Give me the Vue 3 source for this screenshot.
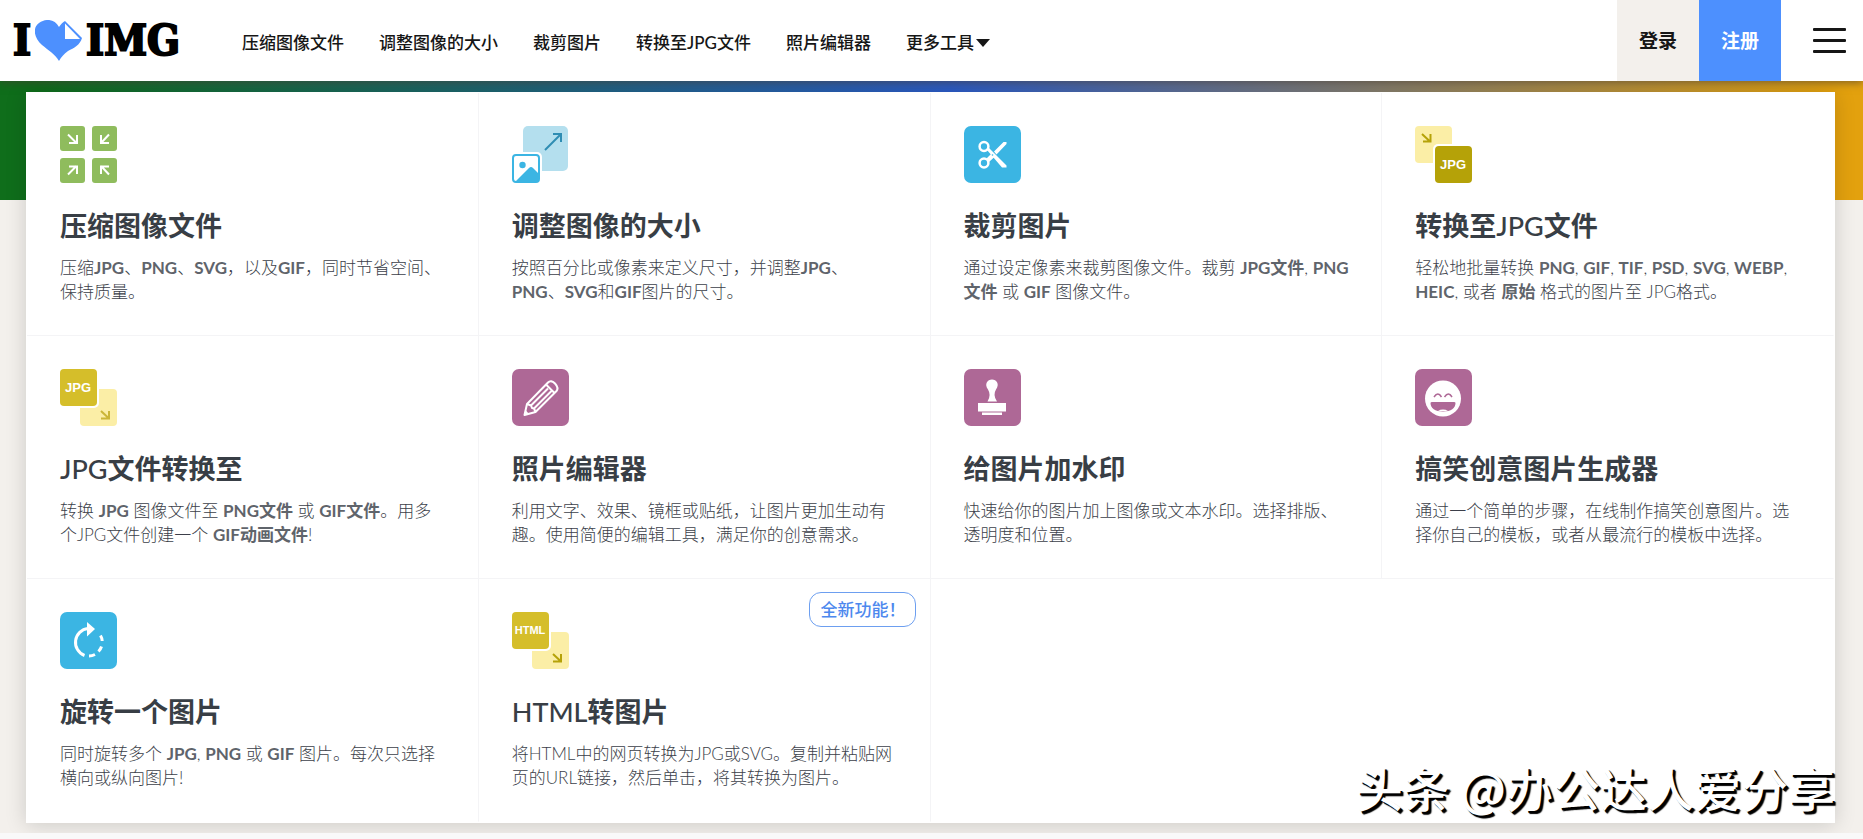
<script setup>
const navItems = ['压缩图像文件', '调整图像的大小', '裁剪图片', '转换至JPG文件', '照片编辑器']

// Descriptions mark their emphasised words with asterisks; each string is one line.
const tools = [
  { icon: 'compress', title: '压缩图像文件', lines: ['压缩*JPG*、*PNG*、*SVG*，以及*GIF*，同时节省空间、', '保持质量。'] },
  { icon: 'resize', title: '调整图像的大小', lines: ['按照百分比或像素来定义尺寸，并调整*JPG*、', '*PNG*、*SVG*和*GIF*图片的尺寸。'] },
  { icon: 'crop', title: '裁剪图片', lines: ['通过设定像素来裁剪图像文件。裁剪 *JPG文件*, *PNG*', '*文件* 或 *GIF* 图像文件。'] },
  { icon: 'tojpg', title: '转换至JPG文件', lines: ['轻松地批量转换 *PNG*, *GIF*, *TIF*, *PSD*, *SVG*, *WEBP*,', '*HEIC*, 或者 *原始* 格式的图片至 JPG格式。'] },
  { icon: 'fromjpg', label: 'JPG', title: 'JPG文件转换至', lines: ['转换 *JPG* 图像文件至 *PNG文件* 或 *GIF文件*。用多', '个JPG文件创建一个 *GIF动画文件*!'] },
  { icon: 'edit', title: '照片编辑器', lines: ['利用文字、效果、镜框或贴纸，让图片更加生动有', '趣。使用简便的编辑工具，满足你的创意需求。'] },
  { icon: 'stamp', title: '给图片加水印', lines: ['快速给你的图片加上图像或文本水印。选择排版、', '透明度和位置。'] },
  { icon: 'meme', title: '搞笑创意图片生成器', lines: ['通过一个简单的步骤，在线制作搞笑创意图片。选', '择你自己的模板，或者从最流行的模板中选择。'] },
  { icon: 'rotate', title: '旋转一个图片', lines: ['同时旋转多个 *JPG*, *PNG* 或 *GIF* 图片。每次只选择', '横向或纵向图片!'] },
  { icon: 'fromjpg', label: 'HTML', badge: '全新功能！', title: 'HTML转图片', lines: ['将HTML中的网页转换为JPG或SVG。复制并粘贴网', '页的URL链接，然后单击，将其转换为图片。'] },
]

const runs = (line) => line.split('*').map((text, i) => ({ text, strong: i % 2 === 1 })).filter((r) => r.text)
const titleRuns = (title) => title.split(/([A-Z]+)/).filter(Boolean).map((text) => ({ text, latin: /^[A-Z]/.test(text) }))
</script>

<template>
  <div class="page">
    <header class="header">
      <a class="logo" href="#" aria-label="I love IMG">
        <span>I</span>
        <svg class="heart" viewBox="0 0 47 41" aria-hidden="true">
          <path d="M24 41C20 34 13 30 7 25C-2 17-2 7 4 3C11-2 20-1 24 7C26 4 28 2 30 1L47 18C45 25 39 28 33 31C29 34 26 37 24 41Z" fill="#4d90fe" />
          <path d="M30 3.500V19H45Z" fill="#fff" />
        </svg>
        <span>IMG</span>
      </a>
      <nav class="nav">
        <a v-for="item in navItems" :key="item" href="#">{{ item }}</a>
        <button type="button" class="more">更多工具<span class="caret"></span></button>
      </nav>
      <div class="account">
        <a class="login" href="#">登录</a>
        <a class="signup" href="#">注册</a>
        <button type="button" class="menu" aria-label="菜单"><i></i><i></i><i></i></button>
      </div>
    </header>

    <main class="main">
      <div class="panel">
        <a v-for="tool in tools" :key="tool.title" class="card" href="#">
          <svg class="icon" viewBox="0 0 57 57" fill="none" aria-hidden="true">
            <template v-if="tool.icon === 'compress'">
              <g fill="#8fbc5d">
                <rect width="25" height="25" rx="3" /><rect x="32" width="25" height="25" rx="3" />
                <rect y="32" width="25" height="25" rx="3" /><rect x="32" y="32" width="25" height="25" rx="3" />
              </g>
              <path d="M8 8.500L16.500 17M17 9V17H9M49 8.500L41 17M41 9V17H49M8 48.500L16.500 40M9 40.500H17V48M49 48.500L41 40M41 48V40.500H49" stroke="#fff" stroke-width="2" />
            </template>
            <template v-else-if="tool.icon === 'resize'">
              <rect x="11" width="45" height="45" rx="5" fill="#b4dfee" />
              <path d="M33 24L49 8M41 8H49V16" stroke="#2f8db3" stroke-width="2" />
              <rect x="-3" y="26" width="33" height="34" rx="5" fill="#fff" />
              <rect x="1" y="29" width="26" height="27" rx="3" fill="#fff" stroke="#3bb5e3" stroke-width="2" />
              <circle cx="10.500" cy="39" r="3.200" fill="#3bb5e3" />
              <path d="M3 56L17 42Q19 40 21 42L27 48V54Q27 56 25 56Z" fill="#3bb5e3" />
            </template>
            <template v-else-if="tool.icon === 'crop'">
              <rect width="57" height="57" rx="7" fill="#3bb5e3" />
              <circle cx="20" cy="20.500" r="4.400" stroke="#fff" stroke-width="2.500" />
              <circle cx="20" cy="37" r="4.400" stroke="#fff" stroke-width="2.500" />
              <path d="M23 24L38 41.500H42.500V39.500L25 22ZM42.500 16H39.500L30 25.500L32.500 28.500L42.500 18ZM28 27L22.500 32.500L25 36L31 30.500Z" fill="#fff" />
              <circle cx="28.500" cy="29" r="0.800" fill="#3bb5e3" />
            </template>
            <template v-else-if="tool.icon === 'tojpg'">
              <rect width="37" height="37" rx="4" fill="#fbeea6" />
              <path d="M7 8L15 15.500M15.500 8V15.500H8" stroke="#b5a208" stroke-width="2" />
              <rect x="18" y="18" width="41" height="41" rx="5" fill="#fff" />
              <rect x="20" y="20" width="37" height="37" rx="4" fill="#b5a208" />
              <text class="tag" x="38" y="43">JPG</text>
            </template>
            <template v-else-if="tool.icon === 'fromjpg'">
              <rect x="20" y="20" width="37" height="37" rx="4" fill="#fbeea6" />
              <path d="M41 42L49 49.500M49 42V49.500H41" :stroke="tool.label === 'JPG' ? '#cbb638' : '#b5a208'" stroke-width="2" />
              <rect x="-2" y="-2" width="41" height="41" rx="5" fill="#fff" />
              <rect width="37" height="37" rx="4" fill="#d5be2a" />
              <text class="tag" :class="{ small: tool.label === 'HTML' }" x="18" :y="tool.label === 'HTML' ? 22 : 23">{{ tool.label }}</text>
            </template>
            <template v-else-if="tool.icon === 'edit'">
              <rect width="57" height="57" rx="7" fill="#ae6896" />
              <g stroke="#fff" stroke-width="2" stroke-linejoin="round">
                <path d="M12.500 46L15 35L36 13.500Q39 10.500 43 14.500Q47 19 44.500 22L23.500 43Z" />
                <path d="M34 15.500L42.500 24M36 19.500L19 36.500M39.500 22L22 39.500M15 35L19 36.500L20 39L22 39.500L23.500 43" />
              </g>
              <path d="M12 46.500L13.500 41L17 45Z" fill="#fff" />
            </template>
            <template v-else-if="tool.icon === 'stamp'">
              <rect width="57" height="57" rx="7" fill="#ae6896" />
              <path d="M23.500 32.500Q27.500 26 24 20.500C20 15 23.500 10.500 28 10.500S36 15 32 20.500Q28.500 26 33 32.500Z" fill="#fff" />
              <path d="M14 34H42V42.500H14ZM18 43.500H38V46H18Z" fill="#fff" />
            </template>
            <template v-else-if="tool.icon === 'meme'">
              <rect width="57" height="57" rx="7" fill="#ae6896" />
              <circle cx="28" cy="29.500" r="18" fill="#fff" />
              <path d="M19 28Q23 22 26.500 28M29.500 28Q33.500 22 37 28" stroke="#ae6896" stroke-width="1.500" />
              <path d="M15.500 34Q15.500 33 17 33H39Q40.500 33 40.500 34C40.500 39 36 42.500 28 42.500S15.500 39 15.500 34Z" fill="#ae6896" />
              <path d="M23 41.500Q28 39.500 33 41.500Q28 42.500 23 41.500Z" fill="#fff" />
            </template>
            <template v-else>
              <rect width="57" height="57" rx="7" fill="#3bb5e3" />
              <path d="M28 16.500A14 14 0 0 0 24.500 43.500" stroke="#fff" stroke-width="3" />
              <path d="M27 10L35 17L27 24.500Z" fill="#fff" />
              <path d="M40.500 23.500Q42 26 42.200 29M41.500 34.500Q40.500 37.500 38.500 39.500M35 42.500Q32 44 29 44" stroke="#fff" stroke-width="3" />
            </template>
          </svg>
          <h3>
            <span v-for="(run, i) in titleRuns(tool.title)" :key="i" :class="{ latin: run.latin }">{{ run.text }}</span>
          </h3>
          <p>
            <span v-for="(line, n) in tool.lines" :key="n" class="line"><template v-for="(run, i) in runs(line)" :key="i"><b v-if="run.strong">{{ run.text }}</b><template v-else>{{ run.text }}</template></template></span>
          </p>
          <span v-if="tool.badge" class="badge">{{ tool.badge }}</span>
        </a>
        <div class="watermark">头条 @办公达人爱分享</div>
      </div>
    </main>
  </div>
</template>

<style>
body {
  margin: 0;
  background: #f9f9f9;
}
</style>

<style scoped>
.page {
  font-family: Lato, "Noto Sans CJK SC", sans-serif;
  color: #161616;
}
a {
  color: inherit;
  text-decoration: none;
}
button {
  border: 0;
  padding: 0;
  background: none;
  color: inherit;
  font: inherit;
}
.header {
  position: relative;
  z-index: 1;
  display: flex;
  align-items: center;
  height: 81px;
  background: #fff;
  box-shadow: 0 2px 8px rgba(70, 60, 50, 0.6);
}
.logo {
  display: flex;
  align-items: center;
  gap: 4px;
  margin-left: 13px;
  width: 229px;
  box-sizing: border-box;
  font: 700 43px/81px "DejaVu Serif Condensed", "DejaVu Serif", serif;
  color: #000;
  -webkit-text-stroke: 2px #000;
}
.heart {
  width: 47px;
  height: 41px;
}
.nav {
  display: flex;
  gap: 35px;
  font-size: 17px;
  font-weight: 500;
  line-height: 24px;
  margin-top: 4px;
  white-space: nowrap;
}
.more {
  display: flex;
  align-items: center;
  gap: 2px;
}
.caret {
  border: 7px solid transparent;
  border-top: 8px solid #161616;
  border-bottom: 0;
}
.account {
  display: flex;
  align-self: stretch;
  margin-left: auto;
  font-size: 19px;
  font-weight: 700;
  line-height: 82px;
  text-align: center;
}
.login,
.signup {
  width: 82px;
}
.login {
  background: #f3f0ec;
}
.signup {
  background: #4d90fe;
  color: #fff;
}
.menu {
  display: flex;
  flex-direction: column;
  justify-content: center;
  gap: 8px;
  width: 33px;
  margin: 0 17px 0 32px;
}
.menu i {
  height: 3px;
  border-radius: 1px;
  background: #161616;
}
.main {
  padding: 11px 28px 10px 26px;
  background: linear-gradient(90deg, #0f6e1b 2%, #2c5cc8 51%, #e3a10e 98%) top / 100% 119px no-repeat, #f3f0ec;
  overflow: hidden;
}
.panel {
  position: relative;
  display: grid;
  grid-template-columns: repeat(4, 1fr);
  grid-auto-rows: minmax(243px, auto);
  padding: 1px;
  background: #fff;
  box-shadow: 0 2px 20px rgba(0, 0, 0, 0.16);
}
.card {
  position: relative;
  box-sizing: border-box;
  padding: 33px 0 29px 33px;
  border-right: 1px solid #f4f4f6;
  border-bottom: 1px solid #f4f4f6;
}
.card:nth-child(4n) {
  border-right-color: transparent;
}
.card:nth-child(n + 9) {
  border-bottom-color: transparent;
}
.icon {
  display: block;
  width: 57px;
  height: 57px;
}
.tag {
  font: 700 13px "Liberation Sans", sans-serif;
  fill: #fff;
  text-anchor: middle;
}
.small {
  font-size: 11px;
}
h3 {
  margin: 27px 0 14px;
  font-size: 27px;
  font-weight: 700;
  line-height: 32px;
  color: #383e45;
  display: flex;
}
.latin {
  font-weight: 500;
}
p {
  margin: 0;
  font-size: 17px;
  font-weight: 300;
  line-height: 24px;
  color: #3c3f4a;
  white-space: nowrap;
}
.line {
  display: block;
  height: 24px;
}
b {
  font-weight: 700;
  color: #5f646b;
}
.badge {
  position: absolute;
  top: 13px;
  right: 14px;
  padding: 0 9px 0 11px;
  border: 1px solid #6d9ff0;
  border-radius: 12px;
  font-size: 17px;
  font-weight: 500;
  line-height: 33px;
  color: #4d88ee;
}
.watermark {
  position: absolute;
  right: 0;
  bottom: 4px;
  font-family: "Noto Sans CJK SC", sans-serif;
  font-size: 47px;
  font-weight: 500;
  line-height: 64px;
  color: #fff;
  text-shadow: 2px 2px 0 #000, 3px 3px 1px #000;
  white-space: nowrap;
}
</style>
